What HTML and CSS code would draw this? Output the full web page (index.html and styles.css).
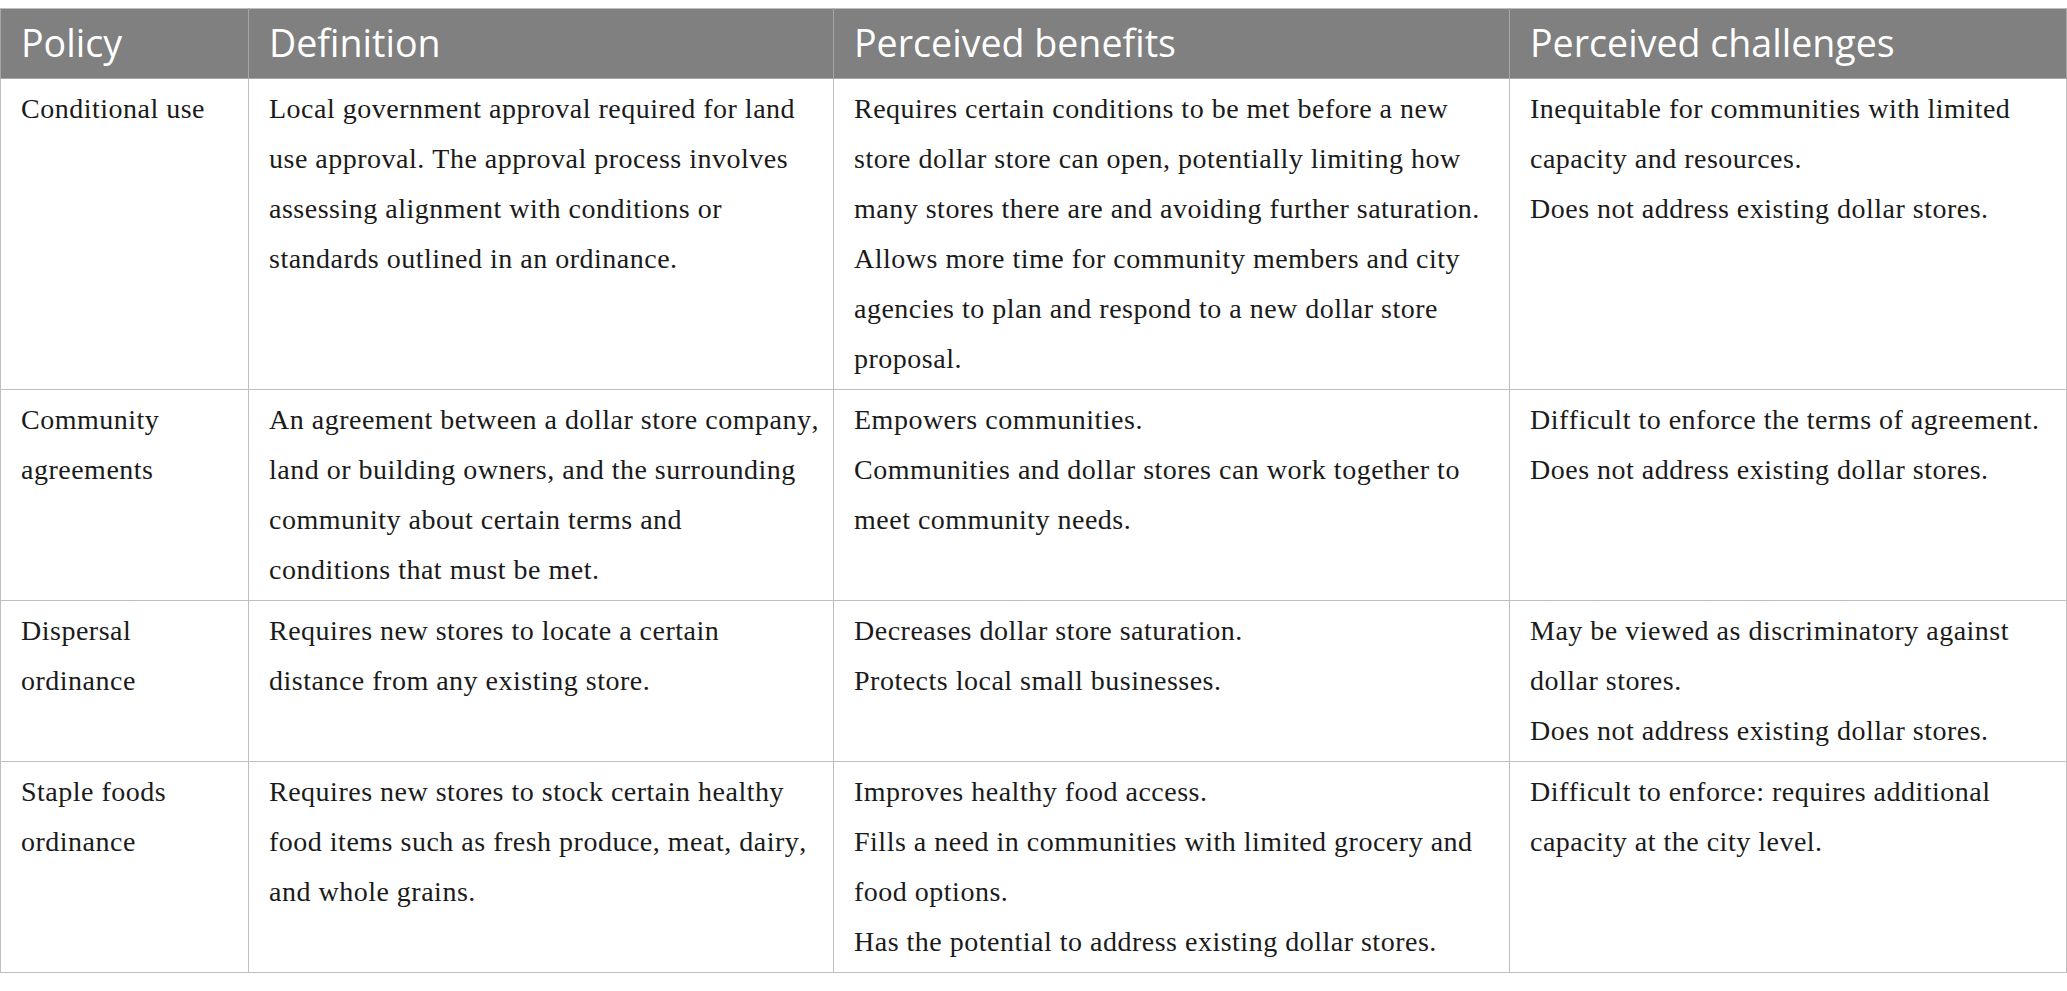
FILE: index.html
```html
<!DOCTYPE html>
<html lang="en">
<head>
<meta charset="utf-8">
<title>Dollar store policies</title>
<link rel="stylesheet" href="styles.css">
</head>
<body>
<table class="policy-table">
  <colgroup>
    <col class="c-policy">
    <col class="c-def">
    <col class="c-ben">
    <col class="c-chal">
  </colgroup>
  <thead>
    <tr>
      <th>Policy</th>
      <th>Definition</th>
      <th>Perceived benefits</th>
      <th>Perceived challenges</th>
    </tr>
  </thead>
  <tbody>
    <tr>
      <td>Conditional use</td>
      <td>Local government approval required for land use approval. The approval process involves assessing alignment with conditions or standards outlined in an ordinance.</td>
      <td>
        <p>Requires certain conditions to be met before a new store dollar store can open, potentially limiting how many stores there are and avoiding further saturation.</p>
        <p>Allows more time for community members and city agencies to plan and respond to a new dollar store proposal.</p>
      </td>
      <td>
        <p>Inequitable for communities with limited capacity and resources.</p>
        <p>Does not address existing dollar stores.</p>
      </td>
    </tr>
    <tr>
      <td>Community agreements</td>
      <td>An agreement between a dollar store company, land or building owners, and the surrounding community about certain terms and<br>conditions that must be met.</td>
      <td>
        <p>Empowers communities.</p>
        <p>Communities and dollar stores can work together to meet community needs.</p>
      </td>
      <td>
        <p>Difficult to enforce the terms of agreement.</p>
        <p>Does not address existing dollar stores.</p>
      </td>
    </tr>
    <tr>
      <td>Dispersal ordinance</td>
      <td>Requires new stores to locate a certain distance from any existing store.</td>
      <td>
        <p>Decreases dollar store saturation.</p>
        <p>Protects local small businesses.</p>
      </td>
      <td>
        <p>May be viewed as discriminatory against dollar stores.</p>
        <p>Does not address existing dollar stores.</p>
      </td>
    </tr>
    <tr>
      <td>Staple foods ordinance</td>
      <td>Requires new stores to stock certain healthy food items such as fresh produce, meat, dairy, and whole grains.</td>
      <td>
        <p>Improves healthy food access.</p>
        <p>Fills a need in communities with limited grocery and food options.</p>
        <p>Has the potential to address existing dollar stores.</p>
      </td>
      <td>
        <p>Difficult to enforce: requires additional capacity at the city level.</p>
      </td>
    </tr>
  </tbody>
</table>
</body>
</html>
```

FILE: styles.css
```css
html, body {
  background: #ffffff;
}
body {
  margin: 0;
  padding: 8px 0 0 0;
}
.policy-table {
  width: 2066px;
  border-collapse: collapse;
  table-layout: fixed;
  border: 1px solid #bfbfbf;
}
.c-policy { width: 248px; }
.c-def { width: 585px; }
.c-ben { width: 676px; }
.c-chal { width: 557px; }

.policy-table th {
  background: #808080;
  color: #ffffff;
  font-family: "Open Sans", "Noto Sans", sans-serif;
  font-weight: 400;
  font-size: 37.6px;
  line-height: 50px;
  text-align: left;
  padding: 9px 20px 10px 20px;
  border: 1px solid #a6a6a6;
  border-top-color: #bfbfbf;
}
.policy-table td {
  font-family: "Liberation Serif", "Times New Roman", serif;
  font-size: 28px;
  letter-spacing: 0.5px;
  font-kerning: none;
  line-height: 50px;
  color: #1a1a1a;
  vertical-align: top;
  text-align: left;
  padding: 5px 12px 5px 20px;
  border: 1px solid #bfbfbf;
}
.policy-table td p {
  margin: 0;
}
```
